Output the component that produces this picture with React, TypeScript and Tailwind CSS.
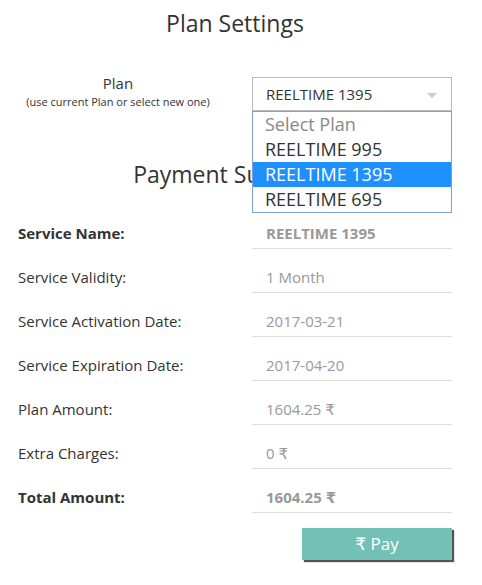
import React from "react";

const rows: { label: string; value: string; bold?: boolean }[] = [
  { label: "Service Name:", value: "REELTIME 1395", bold: true },
  { label: "Service Validity:", value: "1 Month" },
  { label: "Service Activation Date:", value: "2017-03-21" },
  { label: "Service Expiration Date:", value: "2017-04-20" },
  { label: "Plan Amount:", value: "1604.25 ₹" },
  { label: "Extra Charges:", value: "0 ₹" },
  { label: "Total Amount:", value: "1604.25 ₹", bold: true },
];

export default function App() {
  return (
    <div
      className="w-[482px] h-[585px] bg-white text-[#333]"
      style={{ fontFamily: '"Open Sans", "DejaVu Sans", sans-serif' }}
    >
      <h1 className="pt-[7px] pr-[12px] text-center text-[23px] leading-[32px] text-[#333]">Plan Settings</h1>

      <div className="relative mt-[38px] flex">
        <div className="w-[236px] -mt-[4px] text-center">
          <div className="text-[15px] leading-[20px]">Plan</div>
          <div className="text-[11px] leading-[16px] mt-[1px]">(use current Plan or select new one)</div>
        </div>
        <div className="relative ml-[16px] w-[200px]">
          <div className="flex h-[34px] items-center justify-between border border-[#bbb] bg-white pl-[13px] pr-[14px] text-[15px]">
            <span>REELTIME 1395</span>
            <svg width="10" height="6" viewBox="0 0 10 6" className="mt-[3px]">
              <path d="M0 0 L10 0 L5 5 Z" fill="#ccc" />
            </svg>
          </div>
          <div className="absolute left-0 top-[34px] z-10 w-[200px] border border-[#7f9fdc] bg-white text-[18px] leading-[25px]">
            <div className="pl-[12px] text-[#888]">Select Plan</div>
            <div className="pl-[12px]">REELTIME 995</div>
            <div className="bg-[#1e90ff] pl-[12px] text-white">REELTIME 1395</div>
            <div className="pl-[12px]">REELTIME 695</div>
          </div>
        </div>
      </div>

      <h2 className="mt-[47px] pr-[12px] text-center text-[23px] leading-[32px]">Payment Summary</h2>

      <div className="mt-[15px]">
        {rows.map((r) => (
          <div key={r.label} className="flex">
            <div className={`w-[252px] pl-[18px] pt-[18px] text-[15px] leading-[20px] ${r.bold ? "font-bold" : ""}`}>
              {r.label}
            </div>
            <div
              className={`w-[200px] border-b border-[#ddd] pb-[5px] pl-[14px] pt-[18px] text-[15px] leading-[20px] text-[#999] ${r.bold ? "font-bold" : ""}`}
            >
              {r.value}
            </div>
          </div>
        ))}
      </div>

      <div className="mt-[15px] flex">
        <button className="ml-[302px] flex h-[32px] w-[150px] items-center justify-center bg-[#73c0b5] text-[17px] text-white shadow-[2px_2px_1px_#555]">
          ₹ Pay
        </button>
      </div>
    </div>
  );
}
